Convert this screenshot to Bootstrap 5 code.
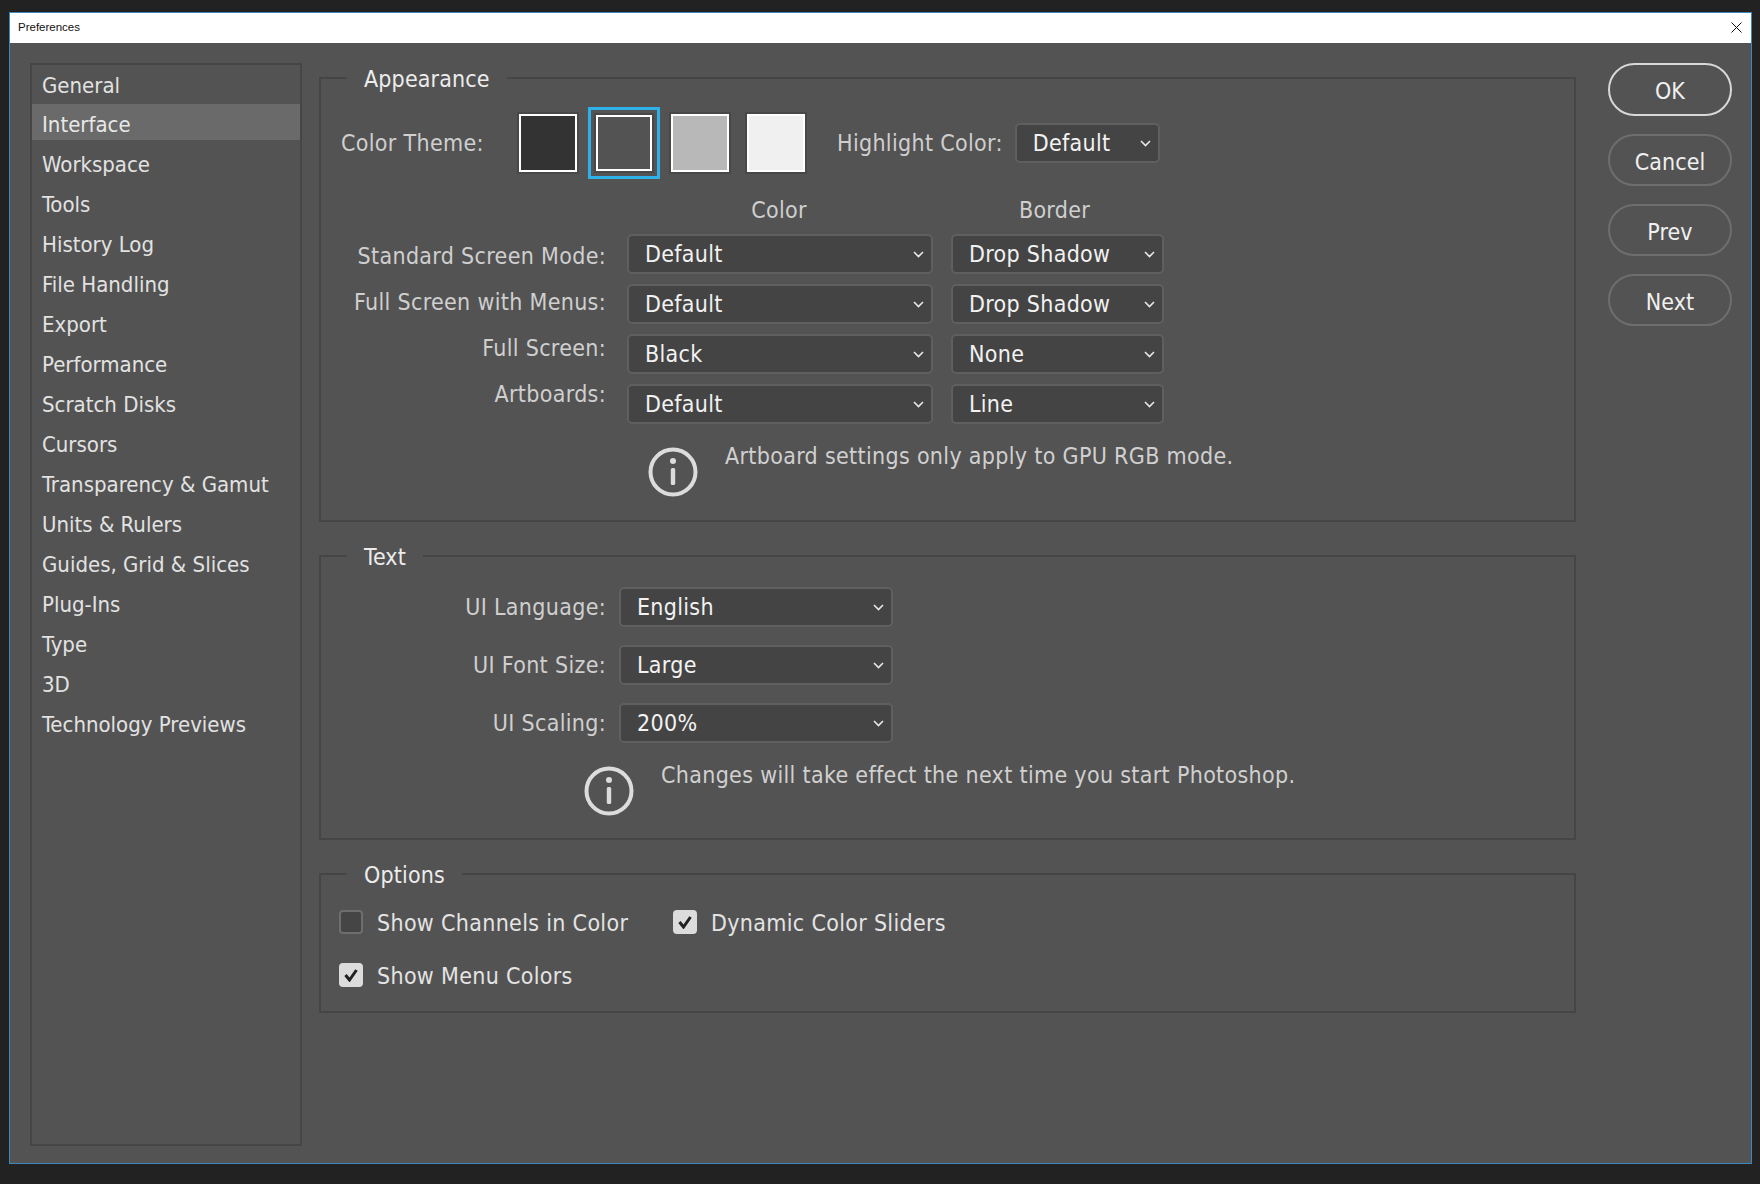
<!DOCTYPE html>
<html lang="en">
<head>
<meta charset="utf-8">
<title>Preferences</title>
<link href="https://cdn.jsdelivr.net/npm/bootstrap@5.3.0/dist/css/bootstrap.min.css" rel="stylesheet">
<style>
html,body{height:100%}
body{background:#222;padding:12px 8px 20px 9px;font-family:"DejaVu Sans Condensed","DejaVu Sans","Liberation Sans",sans-serif;font-stretch:condensed;font-size:23px;letter-spacing:.32px;color:#d0d0d0;overflow:hidden}
.ps-window{height:100%;border:1px solid #3f86bd;background:#535353}
.ps-title{height:30px;background:#fff;color:#111;font-family:"Liberation Sans",sans-serif;font-size:11.5px;letter-spacing:0;padding:0 9px 0 8px;font-stretch:normal}
.ps-title svg{margin-bottom:2px}
.ps-body{padding:20px 19px 17px 20px;gap:17px;height:calc(100% - 30px)}
.ps-side{width:272px;border:2px solid #454545;flex:none;background:transparent;border-radius:0}
.ps-side .list-group-item{height:40px;line-height:40px;padding:1px 8px 0 10px;border:0;background:transparent;color:#e2e2e2;border-radius:0;margin:0;font-size:22px;letter-spacing:0}
.ps-side .list-group-item.active{color:#e8e8e8;background:linear-gradient(#6a6a6a,#6a6a6a) top/100% 36px no-repeat}
.ps-main{width:1257px;flex:none;margin-top:-1px}
.ps-group{border:2px solid #454545;padding:0 20px;margin:0 0 18px;min-width:0}
.ps-group legend{float:none;width:auto;margin:0 0 0 6px;padding:2px 17px 0;font-size:23px;letter-spacing:.15px;line-height:30px;color:#ececec}
.ps-lab{width:265px;text-align:right;line-height:30px;flex:none;color:#cfcfcf}
.ps-swatch{width:58px;height:58px;border:2px solid #fff;box-shadow:0 0 0 2px #484848;flex:none}
.ps-swatch-on{width:56px;height:56px;margin:1px;outline:3px solid #2db1e8;outline-offset:5px}
.form-select.ps-sel{height:40px;padding:0 30px 0 16px;background-color:#444;border:2px solid #5f5f5f;border-radius:5px;color:#f2f2f2;font-size:23px;letter-spacing:.3px;font-family:inherit;font-stretch:condensed;line-height:34px;box-shadow:none;background-size:11px 7px;background-position:right 7px center;background-image:url("data:image/svg+xml,%3Csvg xmlns='http://www.w3.org/2000/svg' viewBox='0 0 11 7'%3E%3Cpath d='M1 1l4.5 4.5L10 1' fill='none' stroke='%23e8e8e8' stroke-width='1.6'/%3E%3C/svg%3E")}
.ps-w143{width:145px}.ps-w212{width:213px}.ps-w306{width:306px}.ps-w272{width:274px}
.ps-head{line-height:30px;text-align:center;color:#cfcfcf}
.ps-btn{width:124px;height:52px;padding:4px 0 0;font-size:23px;letter-spacing:.1px;font-stretch:condensed;color:#f0f0f0;border:2px solid #6e6e6e;background:transparent;line-height:1}
.ps-btn-ok{border-color:#d8d8d8;height:53px}
.ps-btn:hover{color:#fff;border-color:#999}
.form-check-input.ps-box{width:24px;height:24px;margin:0;background-color:#454545;border:2px solid #6e6e6e;border-radius:4px;box-shadow:none;flex:none}
.form-check-input.ps-box:checked{background-color:#dcdcdc;border-color:#dcdcdc;background-size:16px 14px;background-image:url("data:image/svg+xml,%3Csvg xmlns='http://www.w3.org/2000/svg' viewBox='0 0 16 14'%3E%3Cpath d='M2.5 7l4 5 7-10' fill='none' stroke='%23222' stroke-width='3'/%3E%3C/svg%3E")}
.ps-note{line-height:30px;color:#d0d0d0}
.ps-note svg{flex:none;margin-top:6px}
.ps-col-labels{gap:16px;margin-top:7px}
.ps-col-sel{gap:10px}
.ps-opt{line-height:30px;color:#e4e4e4}
.ps-opt span{padding-top:2px}
</style>
</head>
<body>
<div class="ps-window d-flex flex-column">
  <div class="ps-title d-flex align-items-center justify-content-between">
    <span>Preferences</span>
    <svg width="11" height="11" viewBox="0 0 11 11" aria-hidden="true"><path d="M.5.5l10 10M10.5.5l-10 10" stroke="#111" stroke-width="1" fill="none"/></svg>
  </div>
  <div class="ps-body d-flex">
    <div class="list-group ps-side">
      <a class="list-group-item">General</a>
      <a class="list-group-item active">Interface</a>
      <a class="list-group-item">Workspace</a>
      <a class="list-group-item">Tools</a>
      <a class="list-group-item">History Log</a>
      <a class="list-group-item">File Handling</a>
      <a class="list-group-item">Export</a>
      <a class="list-group-item">Performance</a>
      <a class="list-group-item">Scratch Disks</a>
      <a class="list-group-item">Cursors</a>
      <a class="list-group-item">Transparency &amp; Gamut</a>
      <a class="list-group-item">Units &amp; Rulers</a>
      <a class="list-group-item">Guides, Grid &amp; Slices</a>
      <a class="list-group-item">Plug-Ins</a>
      <a class="list-group-item">Type</a>
      <a class="list-group-item">3D</a>
      <a class="list-group-item">Technology Previews</a>
    </div>
    <div class="ps-main">
      <fieldset class="ps-group" style="padding-bottom:23px">
        <legend>Appearance</legend>
        <div class="d-flex align-items-center" style="padding-top:20px;height:78px">
          <div style="width:178px" class="ps-lab text-start">Color Theme:</div>
          <div class="d-flex" style="gap:18px">
            <div class="ps-swatch" style="background:#333"></div>
            <div class="ps-swatch ps-swatch-on" style="background:#535353"></div>
            <div class="ps-swatch" style="background:#b8b8b8"></div>
            <div class="ps-swatch" style="background:#f0f0f0"></div>
          </div>
          <div class="ps-lab" style="width:auto;margin-left:32px;margin-right:12px">Highlight Color:</div>
          <select class="form-select ps-sel ps-w143"><option>Default</option></select>
        </div>
        <div class="d-flex" style="margin-top:23px;padding-left:285px">
          <div class="ps-head ps-w306">Color</div>
          <div class="ps-head ps-w212" style="margin-left:16px">Border</div>
        </div>
        <div class="d-flex" style="margin-top:9px">
          <div class="ps-col-labels d-flex flex-column" style="width:265px">
            <div class="ps-lab">Standard Screen Mode:</div>
            <div class="ps-lab">Full Screen with Menus:</div>
            <div class="ps-lab">Full Screen:</div>
            <div class="ps-lab">Artboards:</div>
          </div>
          <div class="ps-col-sel d-flex flex-column" style="margin-left:21px">
            <select class="form-select ps-sel ps-w306"><option>Default</option></select>
            <select class="form-select ps-sel ps-w306"><option>Default</option></select>
            <select class="form-select ps-sel ps-w306"><option>Black</option></select>
            <select class="form-select ps-sel ps-w306"><option>Default</option></select>
          </div>
          <div class="ps-col-sel d-flex flex-column" style="margin-left:18px">
            <select class="form-select ps-sel ps-w212"><option>Drop Shadow</option></select>
            <select class="form-select ps-sel ps-w212"><option>Drop Shadow</option></select>
            <select class="form-select ps-sel ps-w212"><option>None</option></select>
            <select class="form-select ps-sel ps-w212"><option>Line</option></select>
          </div>
        </div>
        <div class="ps-note d-flex" style="margin:17px 0 0 307px;gap:27px">
          <svg width="50" height="50" viewBox="0 0 50 50" aria-hidden="true"><circle cx="25" cy="25" r="22.5" fill="none" stroke="#dcdcdc" stroke-width="4"/><circle cx="25" cy="14" r="3" fill="#dcdcdc"/><rect x="22.8" y="21" width="4.4" height="17" rx="1.5" fill="#dcdcdc"/></svg>
          <span>Artboard settings only apply to GPU RGB mode.</span>
        </div>
      </fieldset>
      <fieldset class="ps-group" style="padding-bottom:22px">
        <legend>Text</legend>
        <div class="d-flex flex-column" style="padding-top:15px;gap:18px">
          <div class="d-flex align-items-center" style="gap:13px"><div class="ps-lab">UI Language:</div><select class="form-select ps-sel ps-w272"><option>English</option></select></div>
          <div class="d-flex align-items-center" style="gap:13px"><div class="ps-lab">UI Font Size:</div><select class="form-select ps-sel ps-w272"><option>Large</option></select></div>
          <div class="d-flex align-items-center" style="gap:13px"><div class="ps-lab">UI Scaling:</div><select class="form-select ps-sel ps-w272"><option>200%</option></select></div>
        </div>
        <div class="ps-note d-flex" style="margin:17px 0 0 243px;gap:27px">
          <svg width="50" height="50" viewBox="0 0 50 50" aria-hidden="true"><circle cx="25" cy="25" r="22.5" fill="none" stroke="#dcdcdc" stroke-width="4"/><circle cx="25" cy="14" r="3" fill="#dcdcdc"/><rect x="22.8" y="21" width="4.4" height="17" rx="1.5" fill="#dcdcdc"/></svg>
          <span>Changes will take effect the next time you start Photoshop.</span>
        </div>
      </fieldset>
      <fieldset class="ps-group" style="padding-bottom:24px;padding-left:18px">
        <legend style="margin-left:8px">Options</legend>
        <div class="d-flex flex-column" style="padding-top:20px;gap:29px">
          <div class="d-flex">
            <label class="ps-opt d-flex align-items-center" style="width:334px;gap:14px;height:24px"><input class="form-check-input ps-box" type="checkbox"><span>Show Channels in Color</span></label>
            <label class="ps-opt d-flex align-items-center" style="gap:14px;height:24px"><input class="form-check-input ps-box" type="checkbox" checked><span>Dynamic Color Sliders</span></label>
          </div>
          <label class="ps-opt d-flex align-items-center" style="gap:14px;height:24px"><input class="form-check-input ps-box" type="checkbox" checked><span>Show Menu Colors</span></label>
        </div>
      </fieldset>
    </div>
    <div class="d-flex flex-column" style="gap:18px;margin-left:15px">
      <button class="btn ps-btn ps-btn-ok rounded-pill">OK</button>
      <button class="btn ps-btn rounded-pill">Cancel</button>
      <button class="btn ps-btn rounded-pill">Prev</button>
      <button class="btn ps-btn rounded-pill">Next</button>
    </div>
  </div>
</div>
<script src="https://cdn.jsdelivr.net/npm/bootstrap@5.3.0/dist/js/bootstrap.bundle.min.js"></script>
</body>
</html>
